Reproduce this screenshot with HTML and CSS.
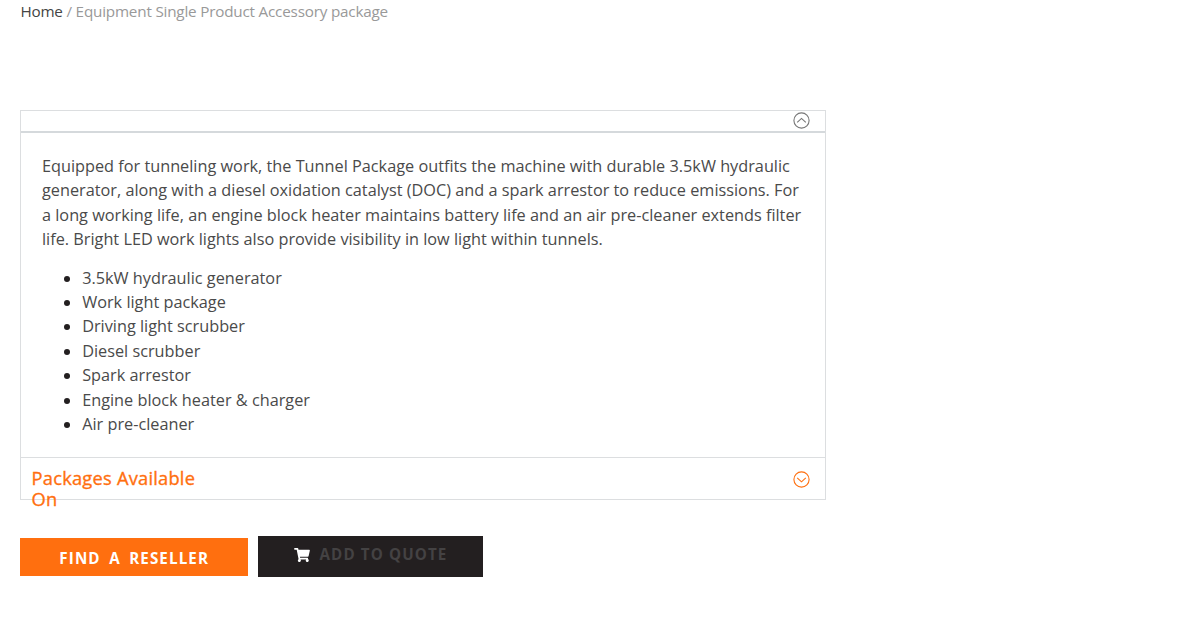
FILE: index.html
```html
<!DOCTYPE html>
<html lang="en">
<head>
<meta charset="utf-8">
<title>Accessory package</title>
<link rel="stylesheet" href="styles.css">
</head>
<body>
<main class="page">
  <nav class="breadcrumb"><a class="home" href="#">Home</a> / Equipment Single Product Accessory package</nav>
  <section class="accordion">
    <header class="bar bar-open">
      <svg class="chevron" viewBox="0 0 17 17"><circle cx="8.5" cy="8.5" r="7.6"/><path d="M4.2 10.4 8.5 6.4l4.3 4"/></svg>
    </header>
    <div class="content">
      <p>Equipped for tunneling work, the Tunnel Package outfits the machine with durable 3.5kW hydraulic<br>generator, along with a diesel oxidation catalyst (DOC) and a spark arrestor to reduce emissions. For<br>a long working life, an engine block heater maintains battery life and an air pre-cleaner extends filter<br>life. Bright LED work lights also provide visibility in low light within tunnels.</p>
      <ul>
        <li><span>3.5kW hydraulic generator</span></li>
        <li><span>Work light package</span></li>
        <li><span>Driving light scrubber</span></li>
        <li><span>Diesel scrubber</span></li>
        <li><span>Spark arrestor</span></li>
        <li><span>Engine block heater &amp; charger</span></li>
        <li><span>Air pre-cleaner</span></li>
      </ul>
    </div>
    <header class="bar bar-closed">
      <h2>Packages Available On</h2>
      <svg class="chevron" viewBox="0 0 17 17"><circle cx="8.5" cy="8.5" r="7.6"/><path d="M4.2 6.8 8.5 10.8l4.3-4"/></svg>
    </header>
  </section>
  <div class="actions">
    <a class="button reseller" href="#">FIND A RESELLER</a>
    <a class="button quote" href="#">
      <svg class="cart" viewBox="0 0 576 512"><path d="M528.12 301.319l47.273-208C578.806 78.301 567.391 64 551.99 64H159.208l-9.166-44.81C147.758 8.021 137.93 0 126.529 0H24C10.745 0 0 10.745 0 24v16c0 13.255 10.745 24 24 24h69.883l70.248 343.435C147.325 417.1 136 435.222 136 456c0 30.928 25.072 56 56 56s56-25.072 56-56c0-15.674-6.447-29.835-16.824-40h209.647C430.447 426.165 424 440.326 424 456c0 30.928 25.072 56 56 56s56-25.072 56-56c0-22.172-12.888-41.332-31.579-50.405l5.517-24.276c3.413-15.018-8.002-29.319-23.403-29.319H218.117l-6.545-32h293.145c11.206 0 20.92-7.754 23.403-18.681z"/></svg>
      <span>ADD TO QUOTE</span>
    </a>
  </div>
</main>
</body>
</html>
```

FILE: styles.css
```css
* { box-sizing: border-box; }
body {
  margin: 0;
  background: #fff;
  color: #231f20;
  font-family: "Open Sans", sans-serif;
  font-size: 16.28px;
  line-height: 24.4px;
}
a { text-decoration: none; }
.page { padding-left: 20.4px; }
.breadcrumb {
  height: 24px;
  color: #999;
  font-size: 15.25px;
  line-height: 22px;
  letter-spacing: -0.2px;
}
.home { color: #444; }
.accordion {
  width: 805.4px;
  height: 390px;
  margin-top: 86px;
  border: 1px solid #dcdee0;
}
.bar {
  display: flex;
  justify-content: space-between;
  padding: 0 14.5px 0 10.2px;
}
.bar-open {
  height: 22px;
  justify-content: flex-end;
  align-items: center;
  border-bottom: 2px solid #d5d9dc;
  color: #777;
}
.content {
  height: 324px;
  padding: 21px 20px 0 20.6px;
  color: #4a4a4a;
}
p { margin: 0 0 14px; white-space: nowrap; }
ul { margin: 0; padding-left: 40.2px; color: #231f20; }
li span { color: #4a4a4a; }
.bar-closed {
  height: 42px;
  padding-top: 9px;
  border-top: 1px solid #dcdee0;
  color: #ff6f0f;
}
h2 {
  width: 185px;
  margin: 0;
  font-size: 18.3px;
  font-weight: 400;
  line-height: 21px;
  letter-spacing: 0.22px;
  -webkit-text-stroke: 0.35px currentColor;
}
.chevron {
  flex: none;
  width: 17px;
  height: 17px;
  margin-top: 4px;
  fill: none;
  stroke: currentColor;
  stroke-width: 1.1;
}
.bar-open .chevron { margin-top: -2px; }
.actions { display: flex; margin-top: 36px; }
.button {
  display: flex;
  justify-content: center;
  align-items: center;
  font-size: 15.2px;
  font-weight: 700;
  letter-spacing: 1.1px;
}
.reseller {
  width: 227.6px;
  height: 37.5px;
  margin: 2px 10px 0 0;
  padding-top: 2px;
  background: #ff6f0f;
  color: #fff;
  word-spacing: 3.4px;
}
.quote {
  width: 225px;
  height: 41px;
  padding-bottom: 4px;
  background: #231f20;
  color: #444243;
}
.cart {
  width: 16px;
  height: 14px;
  margin-right: 10px;
  fill: #fff;
}
```
